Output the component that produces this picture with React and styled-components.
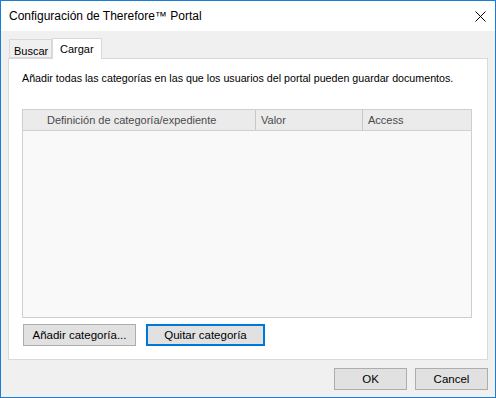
import React, { useState } from "react";
import styled, { createGlobalStyle } from "styled-components";

const GlobalStyle = createGlobalStyle`
  html, body { margin: 0; padding: 0; background: #fff; }
  body { font-family: "Liberation Sans", Arial, sans-serif; font-size: 11px; color: #000; }
`;

const Window = styled.div`
  width: 496px;
  height: 398px;
  box-sizing: border-box;
  border: 1px solid #1a7fd4;
  display: flex;
  flex-direction: column;
  background: #f0f0f0;
`;

const TitleBar = styled.div`
  height: 30px;
  background: #fff;
  display: flex;
  align-items: center;
  justify-content: space-between;
  padding: 0 9px 0 8px;
  font-size: 12px;
  color: #000;
`;

const CloseIcon = () => (
  <svg width="11" height="11" viewBox="0 0 11 11">
    <path d="M0.5 0.5 L10.5 10.5 M10.5 0.5 L0.5 10.5" stroke="#000" strokeWidth="1" />
  </svg>
);

const Body = styled.div`
  flex: 1;
  display: flex;
  flex-direction: column;
  padding: 7px;
`;

const TabRow = styled.div`
  display: flex;
  align-items: flex-end;
  height: 20px;
  padding-left: 1px;
`;

const Tab = styled.div`
  box-sizing: border-box;
  height: ${p => (p.$active ? "21px" : "19px")};
  width: ${p => p.$w}px;
  border: 1px solid #d9d9d9;
  border-bottom: ${p => (p.$active ? "none" : "1px solid #d9d9d9")};
  border-left: ${p => (p.$first || p.$active ? "1px solid #d9d9d9" : "none")};
  background: ${p => (p.$active ? "#fff" : "#f0f0f0")};
  padding: ${p => (p.$active ? "3px 0 0 7px" : "4px 0 0 4px")};
  font-size: 11px;
  line-height: 14px;
  position: relative;
  z-index: ${p => (p.$active ? 1 : 0)};
  margin-bottom: ${p => (p.$active ? "-1px" : "0")};
`;

const Panel = styled.div`
  height: 302px;
  box-sizing: border-box;
  border: 1px solid #d9d9d9;
  background: #fff;
  display: flex;
  flex-direction: column;
  padding: 12px 15px 13px 13px;
`;

const Description = styled.div`
  font-size: 10.7px;
  line-height: 15px;
  white-space: nowrap;
  margin-bottom: 23px;
`;

const ListView = styled.div`
  height: 209px;
  box-sizing: border-box;
  border: 1px solid #cfcfcf;
  display: flex;
  flex-direction: column;
  background: #f9f9f9;
`;

const HeaderRow = styled.div`
  display: grid;
  grid-template-columns: 233px 107px 1fr;
  height: 21px;
  box-sizing: border-box;
  border-bottom: 1px solid #d0d0d0;
  background: #ebebeb;
`;

const HeaderCell = styled.div`
  display: flex;
  align-items: center;
  padding-left: ${p => p.$pad}px;
  border-right: ${p => (p.$last ? "none" : "1px solid #c8c8c8")};
  color: #4a4a4a;
  font-size: 11px;
`;

const ButtonRow = styled.div`
  display: flex;
  gap: 10px;
  margin-top: 6px;
  padding-left: 1px;
`;

const Button = styled.button`
  box-sizing: border-box;
  width: ${p => p.$w}px;
  height: 22px;
  background: #e1e1e1;
  border: ${p => (p.$focused ? "2px solid #0078d7" : "1px solid #adadad")};
  font-family: "Liberation Sans", Arial, sans-serif;
  font-size: 11.5px;
  color: #000;
  padding: 0;
  margin: 0;
`;

const Footer = styled.div`
  display: flex;
  justify-content: flex-end;
  gap: 8px;
  margin-top: 8px;
`;

export default function App() {
  const [tab, setTab] = useState(1);
  return (
    <>
      <GlobalStyle />
      <Window>
        <TitleBar>
          <span>Configuración de Therefore™ Portal</span>
          <CloseIcon />
        </TitleBar>
        <Body>
          <TabRow>
            <Tab $first $w={43} $active={tab === 0} onClick={() => setTab(0)}>Buscar</Tab>
            <Tab $w={50} $active={tab === 1} onClick={() => setTab(1)}>Cargar</Tab>
          </TabRow>
          <Panel>
            <Description>
              Añadir todas las categorías en las que los usuarios del portal pueden guardar documentos.
            </Description>
            <ListView>
              <HeaderRow>
                <HeaderCell $pad={24}>Definición de categoría/expediente</HeaderCell>
                <HeaderCell $pad={5}>Valor</HeaderCell>
                <HeaderCell $pad={5} $last>Access</HeaderCell>
              </HeaderRow>
            </ListView>
            <ButtonRow>
              <Button $w={113}>Añadir categoría...</Button>
              <Button $w={119} $focused>Quitar categoría</Button>
            </ButtonRow>
          </Panel>
          <Footer>
            <Button $w={73}>OK</Button>
            <Button $w={73}>Cancel</Button>
          </Footer>
        </Body>
      </Window>
    </>
  );
}
